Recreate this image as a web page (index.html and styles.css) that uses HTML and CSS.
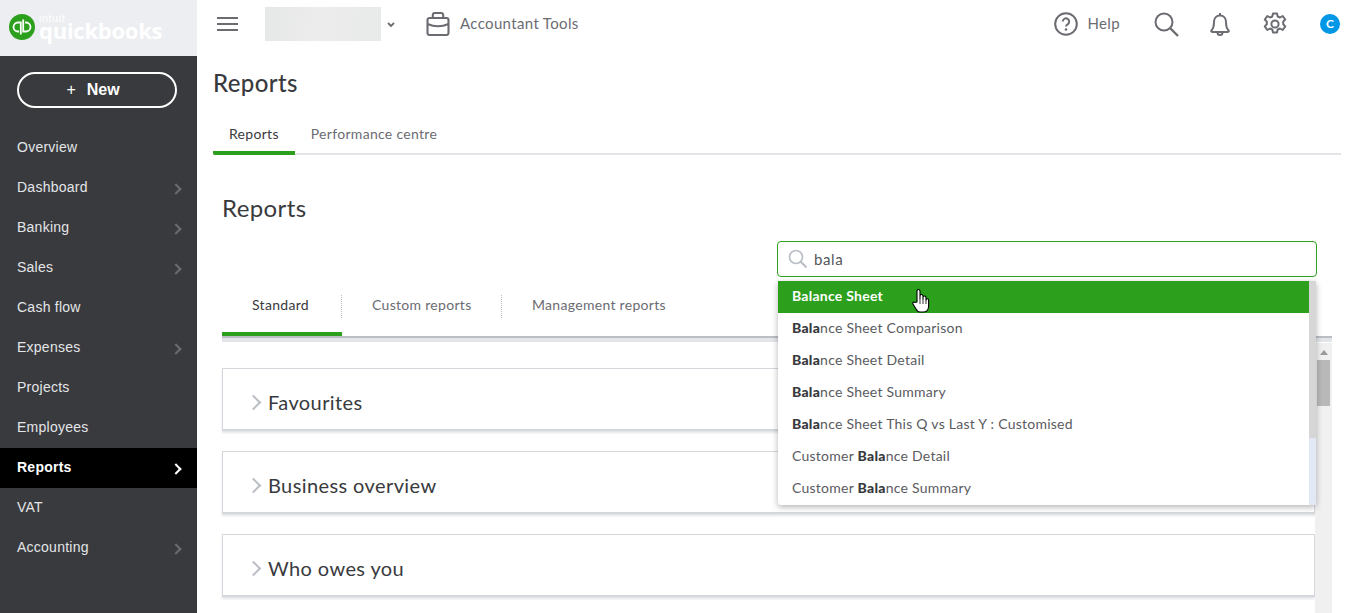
FILE: index.html
```html
<!DOCTYPE html>
<html lang="en">
<head>
    <meta charset="UTF-8">
    <title>Reports - QuickBooks</title>
    <link rel="stylesheet" href="styles.css">
</head>
<body>
    <aside class="sidebar">
        <div class="logo">
            <svg class="logo-mark" width="26" height="26" viewBox="0 0 26 26">
                <circle cx="13" cy="13" r="13" fill="#2ca01c"/>
                <path d="M11.800 20.500V8.500H9a4.500 4.500 0 0 0 0 9h1M14.200 5.500V17.500H17a4.500 4.500 0 0 0 0-9h-1" fill="none" stroke="#fff" stroke-width="1.800"/>
            </svg>
            <div class="logo-text">
                <span class="logo-intuit">intuit</span>
                <span class="logo-name">quickbooks</span>
            </div>
        </div>
        <button class="new-btn"><span class="plus">+</span>New</button>
        <nav class="nav">
            <a class="nav-item">Overview</a>
            <a class="nav-item has-arrow">Dashboard</a>
            <a class="nav-item has-arrow">Banking</a>
            <a class="nav-item has-arrow">Sales</a>
            <a class="nav-item">Cash flow</a>
            <a class="nav-item has-arrow">Expenses</a>
            <a class="nav-item">Projects</a>
            <a class="nav-item">Employees</a>
            <a class="nav-item has-arrow active">Reports</a>
            <a class="nav-item">VAT</a>
            <a class="nav-item has-arrow">Accounting</a>
        </nav>
    </aside>

    <div class="page">
        <header class="topbar">
            <svg class="burger" width="21" height="16" viewBox="0 0 21 16">
                <path d="M0 2h21M0 8h21M0 14h21" stroke="#6b6c72" stroke-width="2.200"/>
            </svg>
            <div class="company"></div>
            <svg class="caret" width="8" height="6" viewBox="0 0 8 6">
                <path d="M1 1l3 3 3-3" fill="none" stroke="#6b6c72" stroke-width="1.800"/>
            </svg>
            <svg class="case-icon" width="24" height="24" viewBox="0 0 24 24">
                <path d="M6.800 6V3a2 2 0 0 1 2-2h6.400a2 2 0 0 1 2 2v3M1.500 12c6.500 2.800 14.500 2.800 21 0M3.500 6h17a2 2 0 0 1 2 2v13a2 2 0 0 1-2 2h-17a2 2 0 0 1-2-2V8a2 2 0 0 1 2-2z" fill="none" stroke="#6b6c72" stroke-width="2.100"/>
            </svg>
            <span class="top-link">Accountant Tools</span>
            <div class="top-right">
                <svg class="help-icon" width="24" height="24" viewBox="0 0 24 24">
                    <circle cx="12" cy="12" r="10.800" fill="none" stroke="#6b6c72" stroke-width="2"/>
                    <path d="M8.800 9.500a3.200 3.200 0 1 1 4.800 2.800c-1 .6-1.600 1.100-1.600 2.200" fill="none" stroke="#6b6c72" stroke-width="2"/>
                    <circle cx="12" cy="17.500" r="1.300" fill="#6b6c72"/>
                </svg>
                <span class="top-link help-label">Help</span>
                <svg class="search-icon" width="25" height="25" viewBox="0 0 25 25">
                    <circle cx="10" cy="10" r="8.500" fill="none" stroke="#6b6c72" stroke-width="2"/>
                    <path d="M16 16l8 8" stroke="#6b6c72" stroke-width="2.400"/>
                </svg>
                <svg class="bell-icon" width="20" height="25" viewBox="0 0 20 25">
                    <path d="M10 3.500c-3.700 0-6 2.700-6 6.500 0 4-.7 6.500-2.500 8.500-.5.600-.2 1.500.7 1.500h15.600c.9 0 1.200-.9.700-1.500C16.700 16.500 16 14 16 10c0-3.800-2.300-6.500-6-6.500zM10 3.500V1M7.500 20.500a2.500 2.500 0 0 0 5 0" fill="none" stroke="#6b6c72" stroke-width="2"/>
                </svg>
                <svg class="gear-icon" width="24" height="24" viewBox="0 0 24 24">
                    <circle cx="12" cy="12" r="3.600" fill="none" stroke="#6b6c72" stroke-width="2"/>
                    <path d="M10 1.500h4l.7 3 2.300 1 2.700-1.500 2.500 3.500-2 2.200v2.500l2 2.300-2.500 3.500-2.700-1.500-2.300 1-.7 3h-4l-.7-3-2.300-1-2.700 1.500-2.500-3.500 2-2.300v-2.500l-2-2.200 2.500-3.500L7 5.500l2.300-1z" fill="none" stroke="#6b6c72" stroke-width="2" stroke-linejoin="round"/>
                </svg>
                <span class="avatar">C</span>
            </div>
        </header>

        <h1 class="page-title">Reports</h1>
        <div class="page-tabs">
            <a class="page-tab active">Reports</a>
            <a class="page-tab">Performance centre</a>
        </div>

        <section class="content">
            <h2 class="section-title">Reports</h2>
            <div class="search-row">
                <div class="search-wrap">
                    <div class="search-box">
                        <svg width="20" height="20" viewBox="0 0 20 20">
                            <circle cx="8" cy="8" r="6.500" fill="none" stroke="#babec5" stroke-width="1.700"/>
                            <path d="M12.500 12.500l6 6" stroke="#babec5" stroke-width="1.900"/>
                        </svg>
                        <span>bala</span>
                    </div>
                    <div class="dropdown">
                        <ul class="results">
                            <li class="selected">Balance Sheet</li>
                            <li><b>Bala</b>nce Sheet Comparison</li>
                            <li><b>Bala</b>nce Sheet Detail</li>
                            <li><b>Bala</b>nce Sheet Summary</li>
                            <li><b>Bala</b>nce Sheet This Q vs Last Y : Customised</li>
                            <li>Customer <b>Bala</b>nce Detail</li>
                            <li>Customer <b>Bala</b>nce Summary</li>
                        </ul>
                        <div class="dd-scroll"></div>
                        <svg class="hand" width="18" height="25" viewBox="0 0 18 25">
                            <path d="M5 14V3a1.500 1.500 0 0 1 3 0v7-2a1.500 1.500 0 0 1 3 0v3-1.500a1.500 1.500 0 0 1 3 0V12a1.300 1.300 0 0 1 2.600 0v6c0 3-1.600 6-4.600 6H8c-2 0-3-1-4-3l-3-5c-.8-1.500 1-2.600 2-1.500z" fill="#fff" stroke="#000" stroke-width="1.100" stroke-linejoin="round"/>
                            <path d="M8 10v6M11 11v5M14 12v4" stroke="#000" stroke-width=".8"/>
                        </svg>
                    </div>
                </div>
            </div>
            <div class="report-tabs">
                <a class="report-tab active">Standard</a>
                <a class="report-tab">Custom reports</a>
                <a class="report-tab">Management reports</a>
            </div>
            <div class="lists">
                <div class="cards">
                    <div class="card"><span class="chev"></span>Favourites</div>
                    <div class="card"><span class="chev"></span>Business overview</div>
                    <div class="card"><span class="chev"></span>Who owes you</div>
                </div>
                <div class="scrollbar">
                    <span class="scroll-up"></span>
                    <div class="scroll-thumb"></div>
                </div>
            </div>
        </section>
    </div>
</body>
</html>
```

FILE: styles.css
```css
* {
    margin: 0;
    padding: 0;
    box-sizing: border-box;
}

html, body {
    height: 613px;
    overflow: hidden;
}

body {
    display: flex;
    font-family: "Lato", "Open Sans", sans-serif;
    background: #fff;
    color: #393a3d;
}

/* sidebar */
.sidebar {
    width: 197px;
    flex-shrink: 0;
    background: #393a3d;
    font-family: "Liberation Sans", Arial, sans-serif;
    font-size: 14px;
    color: #e3e5e8;
}

.logo {
    height: 56px;
    background: #eceef1;
    display: flex;
    align-items: flex-start;
    padding: 14px 0 0 9px;
    gap: 4px;
}

.logo-text {
    display: flex;
    flex-direction: column;
    color: #fff;
}

.logo-intuit {
    height: 7px;
    font-size: 11px;
    line-height: 9px;
    letter-spacing: 0.5px;
}

.logo-name {
    margin-top: -3px;
    font-family: "Open Sans", sans-serif;
    font-size: 22px;
    line-height: 24px;
    font-weight: 700;
    letter-spacing: -0.25px;
}

.new-btn {
    display: block;
    width: 160px;
    height: 36px;
    margin: 16px 0 20px 17px;
    padding: 0 8px 1px 0;
    background: transparent;
    border: 2px solid #fff;
    border-radius: 18px;
    color: #fff;
    font-family: "Liberation Sans", Arial, sans-serif;
    font-size: 16px;
    font-weight: 700;
}

.plus {
    font-weight: 400;
    margin-right: 11px;
}

.nav-item {
    display: block;
    position: relative;
    height: 40px;
    line-height: 38px;
    padding-left: 17px;
    letter-spacing: 0.25px;
}

.nav-item.has-arrow::after {
    content: "";
    position: absolute;
    left: 172px;
    top: 17px;
    width: 6px;
    height: 6px;
    border-top: 2px solid #6b6c72;
    border-right: 2px solid #6b6c72;
    transform: rotate(45deg);
}

.nav-item.active {
    background: #000;
    color: #fff;
    font-weight: 700;
}

.nav-item.active::after {
    border-color: #fff;
}

/* main column */
.page {
    flex: 1;
    min-width: 0;
    padding-right: 4px;
}

.topbar {
    height: 56px;
    display: flex;
    align-items: center;
    padding: 0 1px 8px 20px;
    font-size: 15px;
}

.company {
    width: 116px;
    height: 34px;
    margin-left: 27px;
    background: linear-gradient(100deg, #e6e7e7, #ececec 45%, #e8e9e9);
}

.caret {
    margin: 2px 0 0 6px;
}

.case-icon {
    margin-left: 31px;
}

.top-link {
    margin: 0 0 2px 10px;
    color: #6b6c72;
    letter-spacing: 0.35px;
}

.top-right {
    margin-left: auto;
    display: flex;
    align-items: center;
}

.help-label {
    margin-left: 10px;
}

.search-icon {
    margin-left: 34px;
}

.bell-icon {
    margin-left: 31px;
}

.gear-icon {
    margin-left: 33px;
}

.avatar {
    width: 20px;
    height: 20px;
    margin-left: 33px;
    border-radius: 50%;
    background: #0097e6;
    color: #fff;
    font-size: 12px;
    font-weight: 700;
    line-height: 20px;
    text-align: center;
}

.page-title {
    margin: 12px 0 0 16px;
    font-size: 24px;
    line-height: 30px;
    font-weight: 500;
    letter-spacing: 0.4px;
}

.page-tabs {
    display: flex;
    margin: 22px 0 0 16px;
    height: 35px;
    border-bottom: 2px solid #e3e5e8;
    font-size: 14px;
}

.page-tab {
    height: 35px;
    padding: 0 16px;
    line-height: 28px;
    color: #6b6c72;
    letter-spacing: 0.3px;
}

.page-tab.active {
    color: #393a3d;
    border-bottom: 4px solid #2ca01c;
    border-radius: 0 0 0 2px;
}

/* reports section */
.content {
    padding: 0 9px 0 25px;
}

.section-title {
    margin-top: 38px;
    font-size: 24px;
    line-height: 30px;
    font-weight: 400;
    letter-spacing: 0.4px;
}

.search-row {
    display: flex;
    margin-top: 18px;
    padding-left: 555px;
}

.search-wrap {
    position: relative;
    width: 540px;
}

.search-box {
    height: 36px;
    display: flex;
    align-items: center;
    gap: 6px;
    padding-left: 10px;
    border: 1px solid #2ca01c;
    border-radius: 4px;
    font-size: 15px;
    letter-spacing: 0.6px;
    color: #55565b;
}

.dropdown {
    position: absolute;
    left: 1px;
    top: 40px;
    width: 538px;
    height: 224px;
    z-index: 2;
    display: flex;
    background: #fff;
    border-radius: 0 0 3px 3px;
    box-shadow: 0 2px 6px rgba(0, 0, 0, 0.3);
}

.results {
    flex: 1;
    list-style: none;
    font-size: 14px;
    color: #5a5b60;
    letter-spacing: 0.25px;
}

.results li {
    height: 32px;
    line-height: 29px;
    padding-left: 14px;
}

.results b {
    color: #393a3d;
    font-weight: 900;
}

.results .selected {
    background: #2ca01c;
    color: #fff;
    font-weight: 700;
}

.dd-scroll {
    width: 7px;
    background: linear-gradient(#d6d6d6 0, #d6d6d6 157px, #e3e9f4 157px);
}

.hand {
    position: absolute;
    left: 134px;
    top: 7px;
}

.report-tabs {
    display: flex;
    margin-top: 5px;
    height: 56px;
    border-bottom: 2px solid #babec5;
    box-shadow: 0 4px 0 #e3e5e8;
    font-size: 14px;
}

.report-tab {
    position: relative;
    width: 160px;
    padding: 14px 0 0 30px;
    color: #6b6c72;
    letter-spacing: 0.3px;
    white-space: nowrap;
}

.report-tab.active {
    width: 120px;
    height: 54px;
    color: #393a3d;
    border-bottom: 4px solid #2ca01c;
}

.report-tab:not(:last-child)::after {
    content: "";
    position: absolute;
    right: 0;
    top: 13px;
    height: 23px;
    border-right: 1px dotted #babec5;
}

.lists {
    display: flex;
    margin-top: 30px;
}

.cards {
    width: 1093px;
}

.card {
    display: flex;
    align-items: center;
    height: 63px;
    margin-bottom: 20px;
    padding: 6px 0 0 25px;
    border: 1px solid #d4d7dc;
    border-bottom-width: 2px;
    box-shadow: 0 2px 2px #e3e5e8;
    font-size: 20px;
    letter-spacing: 0.4px;
}

.chev {
    width: 11px;
    height: 11px;
    margin-right: 9px;
    border-top: 2px solid #babec5;
    border-right: 2px solid #babec5;
    transform: rotate(45deg);
}

.scrollbar {
    width: 17px;
    height: 300px;
    margin-top: -25px;
    padding-top: 7px;
    background: #f0f0f0;
}

.scroll-up {
    display: block;
    width: 0;
    margin: 0 auto;
    border: 4px solid transparent;
    border-top-width: 0;
    border-bottom: 5px solid #9a9a9a;
}

.scroll-thumb {
    width: 13px;
    height: 46px;
    margin: 5px auto 0;
    background: #b8b8b8;
}
```
